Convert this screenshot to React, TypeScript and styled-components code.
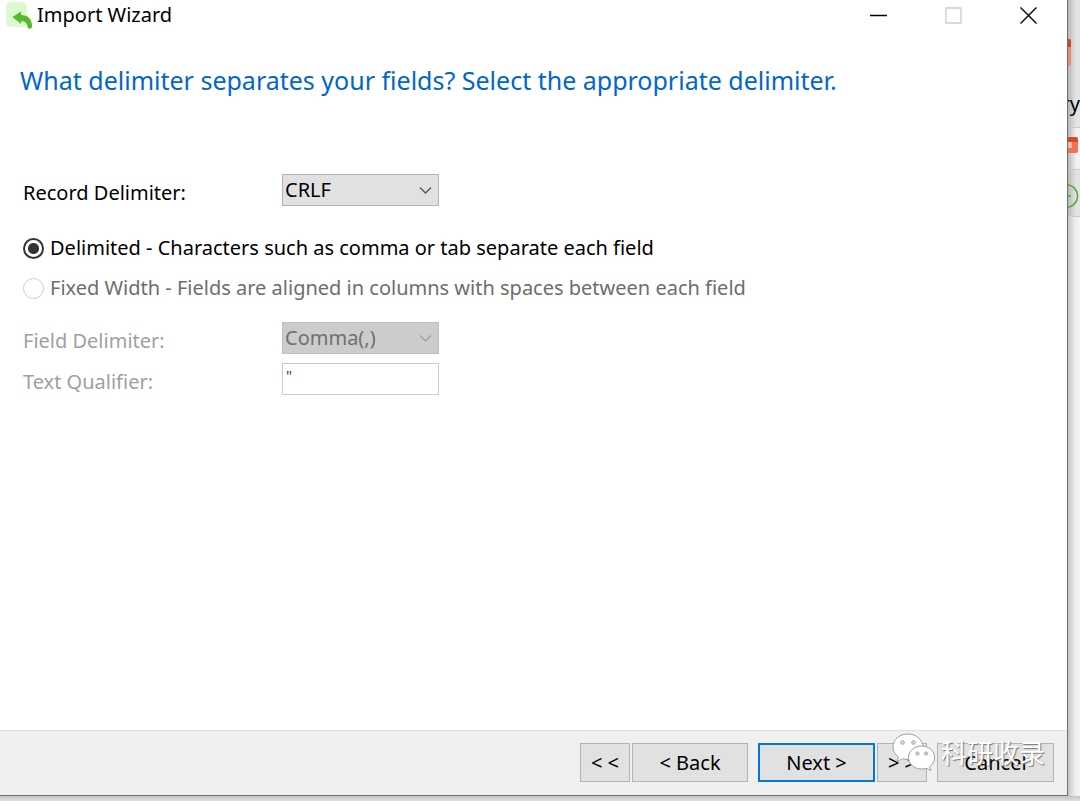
import React from "react";
import styled, { createGlobalStyle } from "styled-components";

const Global = createGlobalStyle`
  *, *::before, *::after { box-sizing: border-box; }
  body { margin: 0; background: #d9d9d9; font-variant-ligatures: none; }
  body, button, select, input {
    font-family: "Noto Sans", "Open Sans", "Noto Sans CJK SC", sans-serif;
    font-size: 20px;
    line-height: 28px;
    color: #000;
  }
`;

const Desktop = styled.div`
  display: grid;
  grid-template-columns: minmax(0, 1fr) 12px;
  grid-template-rows: 1fr 5px;
  min-height: 100vh;
`;

const Dialog = styled.main`
  position: relative;
  display: flex;
  flex-direction: column;
  background: #fff;
  border-right: 1px solid #6f6f6f;
  border-bottom: 1px solid #6f6f6f;
`;

const TitleBar = styled.header`
  display: flex;
  align-items: center;
  gap: 4px;
  height: 30px;
  padding: 0 18px 0 6px;
`;

const Title = styled.h1`
  flex: 1;
  margin: 0;
  font-size: 20px;
  font-weight: 400;
`;

const WindowButton = styled.button`
  display: grid;
  place-items: center;
  width: 42px;
  height: 30px;
  margin-left: 29px;
  padding: 0;
  border: 0;
  background: transparent;
`;

const Content = styled.form`
  flex: 1;
  padding: 32px 20px 0;
`;

const Question = styled.h2`
  margin: 0 0 76px;
  font-size: 25px;
  font-weight: 400;
  line-height: 36px;
  color: #0066cc;
`;

const Field = styled.div`
  display: grid;
  grid-template-columns: 259px 157px;
  align-items: center;
  padding-left: 3px;
  margin-bottom: 9px;
`;

const FieldLabel = styled.label<{ $muted?: boolean }>`
  padding-top: 6px;
  line-height: 26px;
  color: ${(p) => (p.$muted ? "#a0a0a0" : "#000")};
`;

const SelectBox = styled.div`
  position: relative;
  svg {
    position: absolute;
    top: 12px;
    right: 7px;
    pointer-events: none;
  }
`;

const Select = styled.select`
  display: block;
  width: 100%;
  height: 32px;
  padding: 0 24px 0 2px;
  border: 1px solid #b4b4b4;
  border-radius: 0;
  appearance: none;
  background: #e1e1e1;
  &:disabled {
    border-color: #bfbfbf;
    background: #cccccc;
    color: #707070;
    opacity: 1;
  }
`;

const TextInput = styled.input`
  width: 100%;
  height: 32px;
  padding: 0 3px 8px;
  border: 1px solid #cccccc;
  border-radius: 0;
  background: #fff;
  font-size: 15px;
  line-height: 20px;
  color: #444;
`;

const Choices = styled.fieldset`
  margin: 0 0 14px;
  padding: 13px 0 0 3px;
  border: 0;
`;

const Choice = styled.label<{ $muted?: boolean }>`
  display: flex;
  align-items: center;
  gap: 6px;
  height: 40px;
  white-space: nowrap;
  color: ${(p) => (p.$muted ? "#6d6d6d" : "#000")};
`;

const Radio = styled.input`
  flex: none;
  width: 21px;
  height: 21px;
  margin: 0;
  border: 1px solid #cccccc;
  border-radius: 50%;
  appearance: none;
  background: #fff;
  &:checked {
    border: 2px solid #333;
    background: radial-gradient(circle, #333 5px, #fff 6px);
  }
`;

const Footer = styled.footer`
  display: flex;
  justify-content: flex-end;
  height: 65px;
  padding: 12px 13px 0;
  border-top: 1px solid #e0e0e0;
  background: #f0f0f0;
`;

const NavButton = styled.button<{ $width: number; $gap?: number; $primary?: boolean }>`
  width: ${(p) => p.$width}px;
  height: 39px;
  margin-left: ${(p) => p.$gap ?? 2}px;
  padding: 0;
  border: ${(p) => (p.$primary ? "2px solid #0078d7" : "1px solid #b4b4b4")};
  background: #e1e1e1;
  white-space: nowrap;
`;

const Watermark = styled.div`
  position: absolute;
  right: 22px;
  bottom: 24px;
  display: flex;
  align-items: center;
  gap: 5px;
  font-family: "Noto Sans CJK SC", sans-serif;
  font-size: 26px;
  line-height: 38px;
  color: #fff;
  text-shadow: 1px 1px 1px #777;
  pointer-events: none;
`;

const Behind = styled.aside`
  display: flex;
  flex-direction: column;
  overflow: hidden;
  background: linear-gradient(to right, #c4c4c4, #ededed 7px, #f5f5f5);
`;

const Strip = styled.div<{ $height: number; $tone: string }>`
  display: flex;
  flex-direction: column;
  height: ${(p) => p.$height}px;
  border-bottom: 1px solid #cbcbcb;
  background: linear-gradient(to right, #b8b8b8, ${(p) => p.$tone} 8px);
  svg { display: block; }
`;

const Clipped = styled.span`
  display: flex;
  justify-content: flex-end;
  margin-top: 24px;
`;

const Below = styled.div`
  grid-column: 1 / -1;
  background: linear-gradient(#c4c4c4, #dedede);
`;

const Chevron = ({ color }: { color: string }) => (
  <svg width="13" height="9" viewBox="0 0 13 9" fill="none" stroke={color} strokeWidth="1.3" aria-hidden="true">
    <path d="M1 1.5 6.5 7 12 1.5" />
  </svg>
);

export default function App() {
  return (
    <>
      <Global />
      <Desktop>
        <Dialog>
          <TitleBar>
            <svg width="27" height="28" viewBox="0 0 27 28" aria-hidden="true">
              <rect width="21" height="25" y="1" rx="5" fill="#dcf9d0" />
              <path d="M6.500 16 15 10.500v3.500c6.500 0 11 3.900 11 10.500a2 2 0 0 1-4.500 1.500c-.4-4-2.500-5.700-6.500-6v3z" fill="#57b92b" />
            </svg>
            <Title>Import Wizard</Title>
            <WindowButton type="button" aria-label="Minimize">
              <svg width="17" height="17" stroke="#000" strokeWidth="1.5"><path d="M0 8.5h17" /></svg>
            </WindowButton>
            <WindowButton type="button" aria-label="Maximize" disabled>
              <svg width="17" height="17" fill="none" stroke="#ccc" strokeWidth="1.3"><path d="M1 1h15v15H1z" /></svg>
            </WindowButton>
            <WindowButton type="button" aria-label="Close">
              <svg width="17" height="17" stroke="#111" strokeWidth="1.5"><path d="m.5.5 16 16m0-16-16 16" /></svg>
            </WindowButton>
          </TitleBar>

          <Content id="wizard">
            <Question>What delimiter separates your fields? Select the appropriate delimiter.</Question>
            <Field>
              <FieldLabel htmlFor="record">Record Delimiter:</FieldLabel>
              <SelectBox>
                <Select id="record" defaultValue="CRLF">
                  <option>CRLF</option>
                </Select>
                <Chevron color="#555" />
              </SelectBox>
            </Field>
            <Choices>
              <Choice>
                <Radio type="radio" name="format" defaultChecked />
                Delimited - Characters such as comma or tab separate each field
              </Choice>
              <Choice $muted>
                <Radio type="radio" name="format" disabled />
                Fixed Width - Fields are aligned in columns with spaces between each field
              </Choice>
            </Choices>
            <Field>
              <FieldLabel $muted htmlFor="delimiter">Field Delimiter:</FieldLabel>
              <SelectBox>
                <Select id="delimiter" disabled defaultValue="Comma(,)">
                  <option>Comma(,)</option>
                </Select>
                <Chevron color="#a0a0a0" />
              </SelectBox>
            </Field>
            <Field>
              <FieldLabel $muted htmlFor="qualifier">Text Qualifier:</FieldLabel>
              <TextInput id="qualifier" disabled defaultValue={'"'} />
            </Field>
          </Content>

          <Footer>
            <NavButton type="button" $width={50}>&lt; &lt;</NavButton>
            <NavButton type="button" $width={116}>&lt; Back</NavButton>
            <NavButton type="button" $width={117} $gap={10} $primary>Next &gt;</NavButton>
            <NavButton type="button" $width={50}>&gt; &gt;</NavButton>
            <NavButton type="button" $width={117} $gap={10}>Cancel</NavButton>
          </Footer>

          <Watermark>
            <svg width="44" height="38" viewBox="0 0 44 38" stroke="#a0a0a0" strokeWidth="1" aria-hidden="true">
              <path d="M16 1C7.500 1 1 6.500 1 14c0 4.200 2 7.500 5.500 10L5 28.500l5.500-2.800c1.800.5 3.600.8 5.500.8 8.500 0 15-5.500 15-12.500S24.500 1 16 1z" fill="#fff" />
              <path d="M29.500 13C22 13 16.500 18 16.500 24.500S22 36 29.500 36c1.600 0 3.200-.3 4.700-.7l4.600 2.200-1.200-3.800c3.200-2.300 5-5.500 5-9.200C42.600 18 37 13 29.500 13z" fill="#fff" />
              <g fill="#ddd"><circle cx="10.500" cy="9.500" r="1.800" /><circle cx="21.500" cy="9.500" r="1.800" /><circle cx="25.500" cy="20.500" r="1.600" /><circle cx="34" cy="20.500" r="1.600" /></g>
            </svg>
            科研收录
          </Watermark>
        </Dialog>

        <Behind>
          <Strip $height={128} $tone="#e3e3e3">
            <svg width="12" height="66" aria-hidden="true">
              <path d="M0 39h1q2 0 2 2v6H0z" fill="#c9472a" />
              <path d="M0 47h3v17q0 2-2 2H0z" fill="#e98b70" />
            </svg>
            <Clipped>ry</Clipped>
          </Strip>
          <Strip $height={42} $tone="#f1f1f1">
            <svg width="12" height="41" aria-hidden="true">
              <path d="M0 9h8q2 0 2 2v3H0z" fill="#d2492c" />
              <path d="M0 14h10v9q0 2-2 2H0z" fill="#ee7350" />
              <path d="M0 14h4v6H0z" fill="#f2b9a5" />
            </svg>
          </Strip>
          <Strip $height={47} $tone="#e3e3e3">
            <svg width="12" height="46" fill="none" stroke="#4caf20" strokeWidth="1.500" aria-hidden="true">
              <circle cx="-2" cy="26" r="11.500" />
              <path d="M-6 26h9" />
            </svg>
          </Strip>
        </Behind>
        <Below />
      </Desktop>
    </>
  );
}
